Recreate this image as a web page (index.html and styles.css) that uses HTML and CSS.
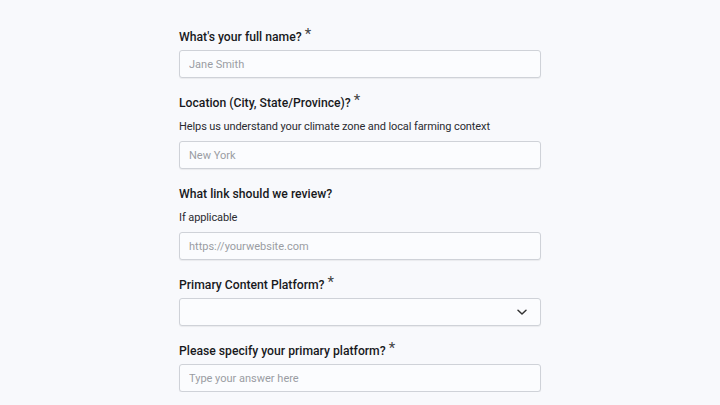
FILE: index.html
```html
<!DOCTYPE html>
<html>
<head>
<meta charset="utf-8">
<link rel="stylesheet" href="styles.css">
</head>
<body>
<form class="form">
  <div class="field">
    <label class="label">What's your full name?<span class="req">*</span></label>
    <input class="input" type="text" placeholder="Jane Smith">
  </div>
  <div class="field">
    <label class="label">Location (City, State/Province)?<span class="req">*</span></label>
    <p class="help">Helps us understand your climate zone and local farming context</p>
    <input class="input" type="text" placeholder="New York">
  </div>
  <div class="field">
    <label class="label">What link should we review?</label>
    <p class="help">If applicable</p>
    <input class="input" type="text" placeholder="https://yourwebsite.com">
  </div>
  <div class="field">
    <label class="label">Primary Content Platform?<span class="req">*</span></label>
    <div class="select">
      <span class="select-value"></span>
      <svg class="chevron" width="12" height="12" viewBox="0 0 12 12"><path d="M2 4.2 L6 8 L10 4.2" fill="none" stroke="#333" stroke-width="1.5" stroke-linecap="round" stroke-linejoin="round"/></svg>
    </div>
  </div>
  <div class="field">
    <label class="label">Please specify your primary platform?<span class="req">*</span></label>
    <input class="input" type="text" placeholder="Type your answer here">
  </div>
</form>
</body>
</html>
```

FILE: styles.css
```css
html, body {
  margin: 0;
  padding: 0;
  background: #f8f9fc;
}
body {
  font-family: Roboto, "Liberation Sans", sans-serif;
  color: #1c1d21;
}
.form {
  width: 362px;
  margin: 0 auto;
  padding-top: 28px;
  display: flex;
  flex-direction: column;
  gap: 16px;
}
.field {
  display: flex;
  flex-direction: column;
}
.label {
  font-size: 12.2px;
  font-weight: 500;
  line-height: 18px;
  margin-bottom: 4px;
  color: #18191d;
}
.req {
  font-size: 15px;
  font-weight: 400;
  line-height: 0;
  color: #444;
  margin-left: 3px;
  position: relative;
  top: -2px;
}
.help {
  margin: 3px 0 6px;
  font-size: 11px;
  letter-spacing: -0.1px;
  line-height: 16px;
  color: #2a2b30;
}
.input, .select {
  box-sizing: border-box;
  width: 362px;
  height: 28px;
  border: 1px solid #cfd2d8;
  border-radius: 3px;
  background: #fbfcfe;
  box-shadow: 0 1px 1px rgba(0,0,0,0.06);
  padding: 0 9px;
  font-family: Roboto, "Liberation Sans", sans-serif;
  font-size: 11px;
  color: #1c1d21;
  margin: 0;
  outline: none;
}
.input::placeholder {
  color: #9a9ca3;
}
.select {
  display: flex;
  align-items: center;
  justify-content: flex-end;
}
.chevron {
  margin-right: 3px;
}
```
